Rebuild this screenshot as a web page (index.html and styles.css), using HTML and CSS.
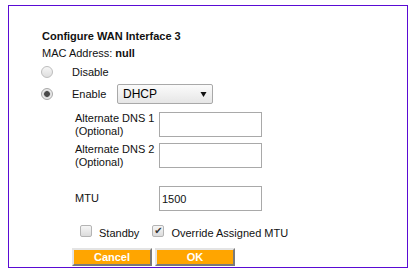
FILE: index.html
```html
<!DOCTYPE html>
<html lang="en">

<head>
    <meta charset="UTF-8">
    <title>Configure WAN Interface 3</title>
    <link rel="stylesheet" href="styles.css">
</head>

<body>

    <div class="panel">
        <h3 class="title">Configure WAN Interface 3</h3>
        <div class="mac">MAC Address: <b>null</b></div>

        <label class="row mode">
            <input type="radio" name="mode" class="radio">
            <span class="mode-label">Disable</span>
        </label>
        <div class="row mode enable">
            <input type="radio" name="mode" class="radio" checked>
            <span class="mode-label">Enable</span>
            <div class="select">
                <span>DHCP</span>
                <svg width="7" height="7" viewBox="0 0 7 7"><polygon points="0.5,1 6.5,1 3.5,6" fill="#111"/></svg>
            </div>
        </div>

        <div class="row field">
            <label class="field-label">Alternate DNS 1<br>(Optional)</label>
            <input type="text" class="text-input">
        </div>
        <div class="row field dns2">
            <label class="field-label">Alternate DNS 2<br>(Optional)</label>
            <input type="text" class="text-input">
        </div>
        <div class="row field mtu">
            <label class="field-label">MTU</label>
            <input type="text" class="text-input" value="1500">
        </div>

        <div class="row checks">
            <input type="checkbox" class="check">
            <span class="check-label">Standby</span>
            <input type="checkbox" class="check second" checked>
            <span class="check-label">Override Assigned MTU</span>
        </div>

        <div class="row buttons">
            <button class="btn">Cancel</button>
            <button class="btn">OK</button>
        </div>
    </div>

</body>

</html>
```

FILE: styles.css
```css
* {
    margin: 0;
    padding: 0;
    box-sizing: border-box;
}

body {
    background: #fff;
    color: #111;
    font-family: "Liberation Sans", Arial, sans-serif;
    font-size: 11px;
    line-height: 13px;
    padding: 5px 0 0 8px;
}

.panel {
    width: 400px;
    height: 263px;
    border: 1px solid #5a0bd4;
    padding: 24px 0 0 32px;
}

.title {
    font-size: 11px;
    font-weight: bold;
    margin-left: 1px;
}

.mac {
    margin: 4px 0 0 1px;
}

.row {
    display: flex;
    align-items: center;
}

.mode {
    height: 16px;
    margin-top: 4px;
}

.enable {
    height: 20px;
}

.radio {
    appearance: none;
    width: 12px;
    height: 12px;
    border: 1px solid #bdbdbd;
    border-radius: 50%;
    background: linear-gradient(#f6f6f6, #dedede);
}

.radio:checked {
    border-color: #a8a8a8;
    background: radial-gradient(circle, #4a4a4a 0, #4a4a4a 2.5px, #c8c8c8 3.2px, #ececec 4px, #e2e2e2 6px);
}

.mode-label {
    margin-left: 19px;
    width: 45px;
}

.select {
    width: 96px;
    height: 20px;
    border: 1px solid #a9a9a9;
    border-radius: 2px;
    background: linear-gradient(#fbfbfb, #e6e6e6);
    display: flex;
    align-items: center;
    justify-content: space-between;
    padding: 0 5px 0 5px;
    font-size: 12px;
    color: #000;
}

.field {
    align-items: flex-start;
    padding-left: 34px;
    margin-top: 8px;
}

.dns2 {
    margin-top: 5px;
}

.mtu {
    align-items: center;
    margin-top: 17px;
}

.field-label {
    width: 84px;
}

.text-input {
    width: 103px;
    height: 25px;
    border: 1px solid #a9a9a9;
    padding: 0 2px;
    font-family: "Liberation Sans", Arial, sans-serif;
    font-size: 11px;
    color: #111;
    outline: none;
}

.checks {
    align-items: flex-start;
    height: 15px;
    margin-top: 14px;
    padding-left: 39px;
}

.check {
    appearance: none;
    width: 12px;
    height: 12px;
    border: 1px solid #b4b4b4;
    border-radius: 2px;
    background: linear-gradient(#f6f6f6, #dcdcdc);
    display: flex;
    align-items: center;
    justify-content: center;
}

.check:checked::before {
    content: "\2714";
    font-family: "DejaVu Sans", sans-serif;
    font-size: 10px;
    line-height: 10px;
    color: #333;
}

.check.second {
    margin-left: 13px;
}

.check-label {
    margin: 2px 0 0 7px;
}

.buttons {
    gap: 3px;
    margin-top: 8px;
    padding-left: 31px;
}

.btn {
    width: 80px;
    height: 18px;
    background: #ffa500;
    color: #fff;
    font-family: "Liberation Sans", Arial, sans-serif;
    font-size: 11px;
    font-weight: bold;
    border: 2px solid;
    border-color: #e4e4e4 #7a7a7a #7a7a7a #e4e4e4;
    cursor: pointer;
}
```
